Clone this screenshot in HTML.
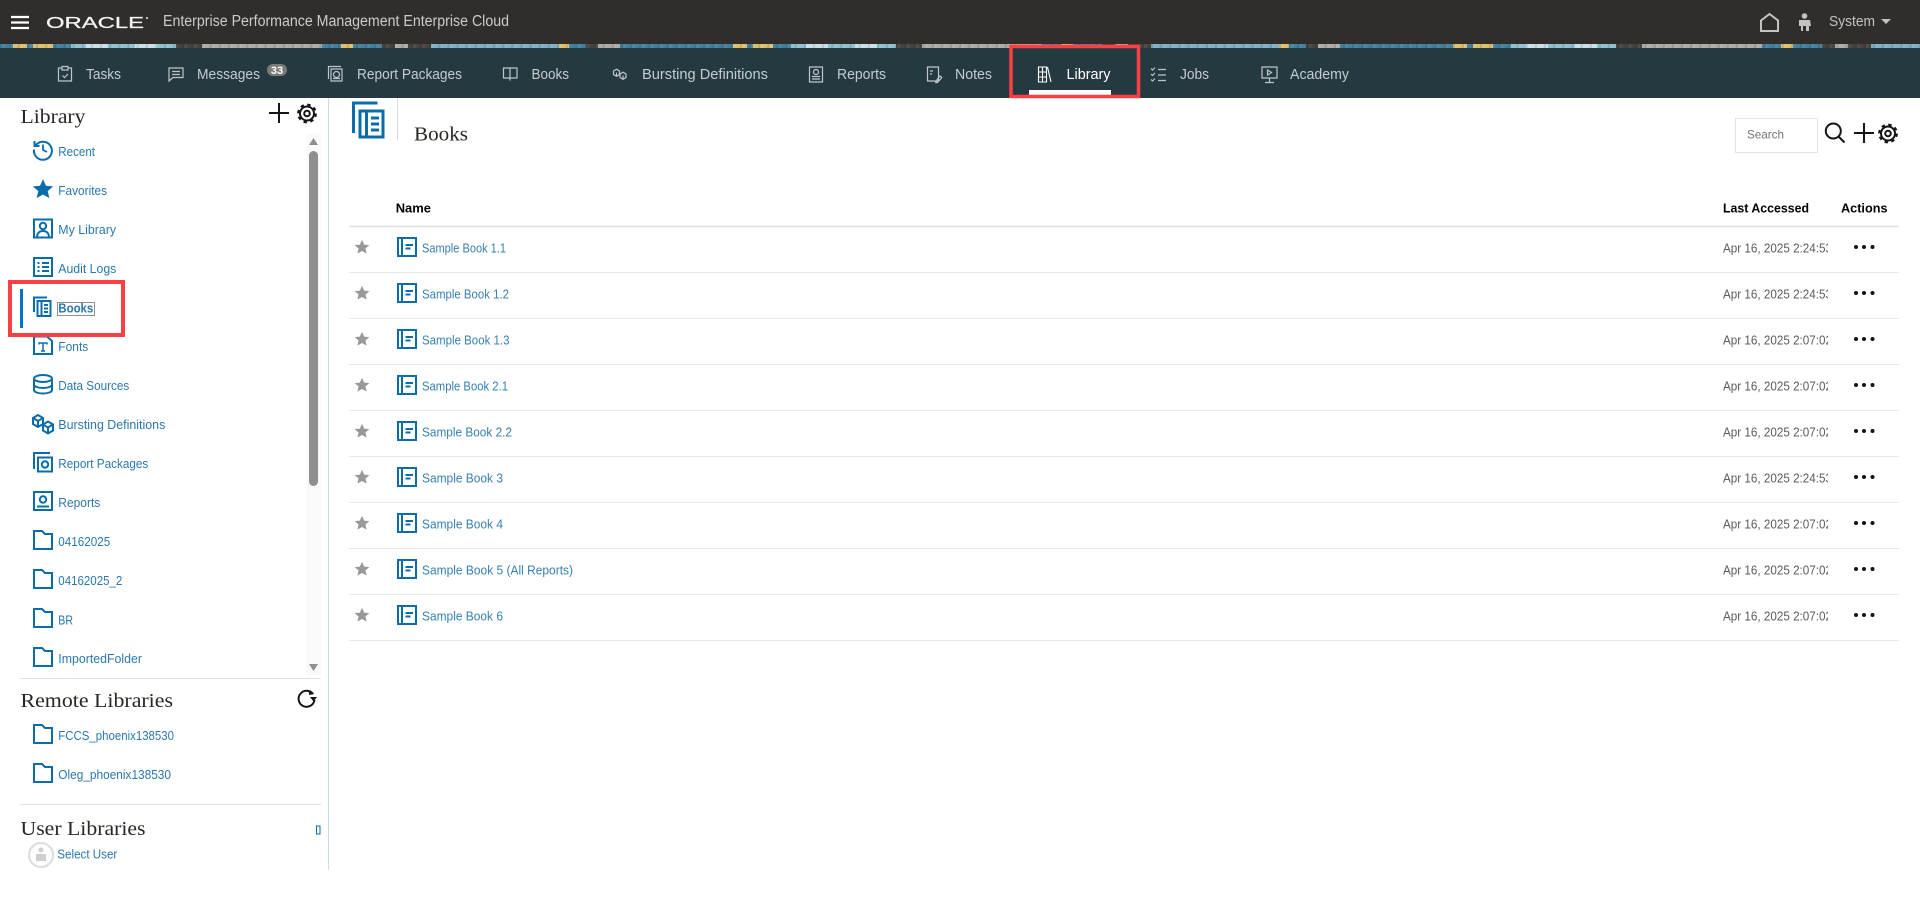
<!DOCTYPE html>
<html lang="en"><head><meta charset="utf-8"><title>Library - Books</title>
<style>
html,body{margin:0;padding:0;background:#fff;width:1920px;height:911px;overflow:hidden}
svg{display:block;position:absolute;left:0;top:0}
text{font-family:"Liberation Sans",sans-serif}
.nav{font-size:15px;fill:#c4cdcf}
.ni{fill:none;stroke:#bcc6c8;stroke-width:1.2}
.side{font-size:12.5px;fill:#2a78ae}
.link{font-size:12.5px;fill:#3680b0}
.date{font-size:12.5px;fill:#5c5c5c}
.th{font-size:13px;font-weight:bold;fill:#000}
.ser{font-family:"Liberation Serif",serif;font-size:20.5px;fill:#2a2622}
.ic{fill:none;stroke:#0b6cab;stroke-width:2}
.k{fill:none;stroke:#161513;stroke-width:2}
.rl{stroke:#e8e8e8;stroke-width:1}
</style></head><body>
<div style="position:absolute;left:0;top:0;width:1920px;height:44px;background:#312d2a"></div>
<div style="position:absolute;left:0;top:44px;width:1920px;height:4px;background-size:720px 100%;background-image:linear-gradient(90deg,#41819f 0 13px,#dcc06e 13px 27px,#41819f 27px 33px,#dcc06e 33px 53px,#41819f 53px 71px,#8fbfd0 71px 86px,#c8e0ea 86px 108px,#8fbfd0 108px 135px,#c8e0ea 135px 157px,#8fbfd0 157px 176px,#454240 176px 202px,#aeaaa6 202px 322px,#41819f 322px 341px,#dcc06e 341px 353px,#41819f 353px 382px,#454240 382px 395px,#aeaaa6 395px 408px,#454240 408px 431px,#7fb0c4 431px 559px,#dcc06e 559px 569px,#41819f 569px 586px,#454240 586px 598px,#aeaaa6 598px 620px,#41819f 620px 720px)"></div>
<div style="position:absolute;left:0;top:44px;width:1920px;height:4px;background:repeating-linear-gradient(100deg,rgba(0,0,0,.1) 0 2px,rgba(255,255,255,.06) 2px 5px,rgba(0,0,0,0) 5px 9px)"></div>
<div style="position:absolute;left:0;top:48px;width:1920px;height:50px;background:#253a40"></div>
<svg width="1920" height="911" viewBox="0 0 1920 911" xmlns="http://www.w3.org/2000/svg">
<defs>
<clipPath id="dc"><rect x="1723" y="220" width="105" height="430"/></clipPath>
<symbol id="folder" viewBox="0 0 20 20" overflow="visible"><path class="ic" d="M1 19V1h8l3 3h7v15z"/></symbol>
<symbol id="book" viewBox="0 0 20 20" overflow="visible"><rect class="ic" x="1" y="1" width="18" height="18"/><path class="ic" d="M5 1v18M8.500 8h7.500M8.500 11.500h5"/></symbol>
<symbol id="gear" viewBox="0 0 20 20" overflow="visible"><circle cx="10" cy="10" r="7" fill="none" stroke="#161513" stroke-width="2"/><circle cx="10" cy="10" r="8.800" fill="none" stroke="#161513" stroke-width="2.200" stroke-dasharray="3.400 3.510"/><circle cx="10" cy="10" r="2.800" fill="none" stroke="#161513" stroke-width="2"/></symbol>
<symbol id="star" viewBox="0 0 20 20" overflow="visible"><path d="M10 1l2.700 6 6.500.6-4.900 4.300 1.500 6.400L10 15l-5.800 3.300 1.500-6.400L.8 7.600 7.300 7z"/></symbol>
</defs>

<!-- top bar -->
<path d="M11 17h18M11 22.500h18M11 28h18" stroke="#fff" stroke-width="2.200"/>
<text x="46" y="28" font-size="15.400" fill="#f5f5f5" stroke="#f5f5f5" stroke-width=".25" textLength="98" lengthAdjust="spacingAndGlyphs">ORACLE</text>
<circle cx="147" cy="18" r="1" fill="#eee"/>
<text x="163" y="26" font-size="15.500" fill="#cdcbc9" textLength="346" lengthAdjust="spacingAndGlyphs">Enterprise Performance Management Enterprise Cloud</text>
<path d="M1761 31V20.500L1769.500 14l8.500 6.500V31z" fill="none" stroke="#c4c3c1" stroke-width="2"/>
<circle cx="1804.500" cy="16" r="2.800" fill="#c4c3c1"/><path d="M1799 20h11l1 6h-2v5h-3v-5h-3v5h-2v-5h-2z" fill="#c4c3c1"/>
<text x="1829" y="26" font-size="15" fill="#c4c3c1" textLength="46" lengthAdjust="spacingAndGlyphs">System</text>
<path d="M1881 19h10l-5 5z" fill="#c4c3c1"/>

<!-- nav -->
<g>
<text class="nav" x="86" y="79" textLength="35" lengthAdjust="spacingAndGlyphs">Tasks</text>
<text class="nav" x="197" y="79" textLength="63" lengthAdjust="spacingAndGlyphs">Messages</text>
<text class="nav" x="357" y="79" textLength="105" lengthAdjust="spacingAndGlyphs">Report Packages</text>
<text class="nav" x="531.500" y="79" textLength="37.500" lengthAdjust="spacingAndGlyphs">Books</text>
<text class="nav" x="642" y="79" textLength="126" lengthAdjust="spacingAndGlyphs">Bursting Definitions</text>
<text class="nav" x="837" y="79" textLength="49" lengthAdjust="spacingAndGlyphs">Reports</text>
<text class="nav" x="955" y="79" textLength="37" lengthAdjust="spacingAndGlyphs">Notes</text>
<text x="1066.500" y="79" font-size="15" fill="#fff" textLength="44" lengthAdjust="spacingAndGlyphs">Library</text>
<text class="nav" x="1180" y="79" textLength="29" lengthAdjust="spacingAndGlyphs">Jobs</text>
<text class="nav" x="1290" y="79" textLength="59" lengthAdjust="spacingAndGlyphs">Academy</text>

<rect x="267" y="64" width="20" height="12" rx="6" fill="#7a7b79"/>
<text x="277" y="74" font-size="11" font-weight="bold" fill="#fff" text-anchor="middle">33</text>

<path class="ni" d="M62 68h-3.500v13h13V68H68M62 66.500h6v3.500h-6zM62.500 75.500l2 2 3.500-3.500"/>
<path class="ni" d="M169 68h14v9.500h-10L169 81zM172 71.500h8M172 74.500h8"/>
<path class="ni" d="M328.500 79V66.500H341M331 69h11v12h-11zM336.500 71.500a3 3 0 1 0 .01 0zM333 78.500h7"/>
<path class="ni" d="M503.500 68h13.500v10h-13.500zM510 68v12.500"/>
<path class="ni" d="M613.500 71l3-1.800 3 1.800v3.500l-3 1.800-3-1.800zM620 74l3-1.800 3 1.800v3.500l-3 1.800-3-1.800zM616.500 72.500v3.500M623 75.500v3.500"/>
<path class="ni" d="M809.500 67h13v15h-13zM816 69.500a2.500 2.500 0 1 0 .01 0zM812 76.500h8M812 79h8"/>
<path class="ni" d="M927.500 67h11v14h-11zM930 71h3M930 74h2M936 81l4-5 1.800 1.500-4.300 5h-1.800z"/>
<g stroke="#fff" stroke-width="1.100" fill="none"><path d="M1038.500 67h4v15h-4zM1042.500 67h4v15h-4zM1047.500 67l3.500 15M1038.500 72h8M1038.500 77h8"/></g>
<path class="ni" d="M1151 68.500l1.500 1.500 2.500-2.500M1151 74l1.500 1.500 2.500-2.500M1151 79.500l1.500 1.500 2.500-2.500M1158 69.500h8M1158 75h8M1158 80.500h8"/>
<path class="ni" d="M1262 67h15v11h-15zM1269.500 78v4M1265 82.500h9M1267.500 70v5l4-2.500z"/>

<rect x="1029" y="90" width="82" height="5" fill="#fff"/>
<rect x="1011" y="46.500" width="127.500" height="50" fill="none" stroke="#fb3f42" stroke-width="3.500"/>
</g>

<!-- sidebar -->
<text class="ser" x="20.500" y="123" textLength="65" lengthAdjust="spacingAndGlyphs">Library</text>
<path d="M279 103v20M269 113h20" stroke="#161513" stroke-width="2"/>
<use href="#gear" x="297" y="103.500" width="20" height="20"/>

<rect x="306" y="133" width="15" height="542" fill="#fafafa"/>
<rect x="309" y="151" width="9" height="335" rx="4.500" fill="#8f8f8f"/>
<path d="M309 145l4.500-7 4.500 7zM309 664l4.500 7 4.500-7z" fill="#8f8f8f"/>

<g transform="translate(33,139.500)"><path class="ic" d="M3 5.500A9 9 0 1 1 1 10M1.500 1.500v5h5"/><path d="M10 5v5.500l4 2" fill="none" stroke="#0b6cab" stroke-width="1.800"/></g>
<use href="#star" x="32" y="178" width="22" height="22" fill="#0b6cab"/>
<g transform="translate(33,218.500)"><rect class="ic" x="1" y="1" width="18" height="18"/><circle cx="10" cy="7.500" r="3.200" class="ic" stroke-width="1.800"/><path class="ic" stroke-width="1.800" d="M4 19c0-5 3-6.500 6-6.500s6 1.500 6 6.500"/></g>
<g transform="translate(33,257)"><rect class="ic" x="1" y="1" width="18" height="18"/><path class="ic" d="M4.500 6h2M9 6h7M4.500 10h2M9 10h7M4.500 14h2M9 14h7"/></g>
<g transform="translate(33,296)"><path class="ic" d="M1 16V1.500h13"/><rect class="ic" x="4.500" y="5" width="13" height="15"/><path class="ic" d="M8.500 5v15M11 9h4M11 12.500h4M11 16h4"/></g>
<g transform="translate(33,335)"><path class="ic" d="M1 1.500V19h18V6l-5-4.500z"/><path d="M6 9.500V8h8v1.500M10 8v8M8 16h4" fill="none" stroke="#0b6cab" stroke-width="1.500"/></g>
<g transform="translate(33,374)"><ellipse class="ic" cx="10" cy="4.500" rx="9" ry="3.500"/><path class="ic" d="M1 4.500V16c0 2 4 3.500 9 3.500s9-1.500 9-3.500V4.500M1 10.500c0 2 4 3.500 9 3.500s9-1.500 9-3.500"/></g>
<g class="ic" stroke-width="2.200"><path d="M33 418l5-3 5 3v6l-5 3-5-3zM38 421v6M33 418l5 3 5-3"/><path d="M43 424.500l5-3 5 3v6l-5 3-5-3zM48 427.500v6M43 424.500l5 3 5-3"/></g>
<g transform="translate(33,452)"><path class="ic" d="M1 17V1h16"/><rect class="ic" x="5" y="5.500" width="14" height="14"/><circle cx="12" cy="12.500" r="3.200" class="ic" stroke-width="2.800"/></g>
<g transform="translate(33,491)"><rect class="ic" x="1" y="1" width="18" height="18"/><circle cx="10" cy="8.500" r="3.200" class="ic" stroke-width="2.800"/><path class="ic" d="M4 15.500h12"/></g>
<use href="#folder" x="33" y="530" width="20" height="20"/>
<use href="#folder" x="33" y="569" width="20" height="20"/>
<use href="#folder" x="33" y="608" width="20" height="20"/>
<use href="#folder" x="33" y="647" width="20" height="20"/>

<text class="side" x="58.300" y="156" textLength="36.700" lengthAdjust="spacingAndGlyphs">Recent</text>
<text class="side" x="58.300" y="195" textLength="48.700" lengthAdjust="spacingAndGlyphs">Favorites</text>
<text class="side" x="58.300" y="234" textLength="57.700" lengthAdjust="spacingAndGlyphs">My Library</text>
<text class="side" x="58.300" y="273" textLength="58" lengthAdjust="spacingAndGlyphs">Audit Logs</text>
<text class="side" x="58.300" y="312.500" font-weight="bold" textLength="35" lengthAdjust="spacingAndGlyphs">Books</text>
<rect x="57.500" y="302.500" width="37" height="13" fill="none" stroke="#222" stroke-width="1" stroke-dasharray="1 1"/>
<text class="side" x="58.300" y="351" textLength="30" lengthAdjust="spacingAndGlyphs">Fonts</text>
<text class="side" x="58.300" y="390" textLength="71" lengthAdjust="spacingAndGlyphs">Data Sources</text>
<text class="side" x="58.300" y="429" textLength="107" lengthAdjust="spacingAndGlyphs">Bursting Definitions</text>
<text class="side" x="58.300" y="468" textLength="90" lengthAdjust="spacingAndGlyphs">Report Packages</text>
<text class="side" x="58.300" y="507" textLength="42" lengthAdjust="spacingAndGlyphs">Reports</text>
<text class="side" x="58.300" y="546" textLength="52" lengthAdjust="spacingAndGlyphs">04162025</text>
<text class="side" x="58.300" y="585" textLength="64" lengthAdjust="spacingAndGlyphs">04162025_2</text>
<text class="side" x="58.300" y="624.500" textLength="14.700" lengthAdjust="spacingAndGlyphs">BR</text>
<text class="side" x="58.300" y="663" textLength="83.700" lengthAdjust="spacingAndGlyphs">ImportedFolder</text>

<rect x="20" y="289" width="3" height="39" fill="#0572ce"/>
<rect x="10" y="282" width="113" height="53" fill="none" stroke="#fb3f42" stroke-width="4"/>

<path d="M20 678.500h301M20 804.500h301" stroke="#e0e0e0" stroke-width="1"/>
<text class="ser" x="20.500" y="707" textLength="152.500" lengthAdjust="spacingAndGlyphs">Remote Libraries</text>
<g transform="translate(297,688)"><path class="k" stroke-width="2.400" d="M16 6A8 8 0 1 0 17.500 12"/><path d="M13 9h7l-3.500 4.500zM12 2l5 4-5 1z" fill="#161513"/></g>
<use href="#folder" x="33" y="724" width="20" height="20"/>
<use href="#folder" x="33" y="763" width="20" height="20"/>
<text class="side" x="58.300" y="740" textLength="115.700" lengthAdjust="spacingAndGlyphs">FCCS_phoenix138530</text>
<text class="side" x="58.300" y="779" textLength="112.700" lengthAdjust="spacingAndGlyphs">Oleg_phoenix138530</text>
<text class="ser" x="20.500" y="835" textLength="125" lengthAdjust="spacingAndGlyphs">User Libraries</text>
<rect x="316.500" y="826" width="3.500" height="8" fill="none" stroke="#0b6cab" stroke-width="1"/>
<circle cx="41" cy="855" r="12" fill="#fff" stroke="#dcdcdc" stroke-width="2"/>
<circle cx="41" cy="850" r="2.500" fill="#cfcfcf"/><path d="M36 854h10v7H36z" fill="#cfcfcf"/>
<text class="side" x="57.300" y="858.500" textLength="60" lengthAdjust="spacingAndGlyphs">Select User</text>
<path d="M328.500 98v772" stroke="#cfdbe3" stroke-width="1"/>

<!-- main header -->
<g transform="translate(352,101)"><path d="M1.500 32V2h24" fill="none" stroke="#0b6cab" stroke-width="3"/><rect x="8" y="10" width="23" height="26" fill="none" stroke="#0b6cab" stroke-width="3"/><path d="M14.500 10v26M19 17h8M19 23h8M19 29h8" fill="none" stroke="#0b6cab" stroke-width="3"/></g>
<path d="M397.500 98v42" stroke="#d6dfe4" stroke-width="1"/>
<text class="ser" x="414" y="140.500" style="font-size:19.500px" textLength="54" lengthAdjust="spacingAndGlyphs">Books</text>

<rect x="1735.500" y="118.500" width="82" height="34" fill="#fff" stroke="#dfe4e9"/>
<text x="1747" y="138.600" font-size="12" fill="#767676" textLength="37" lengthAdjust="spacingAndGlyphs">Search</text>
<circle cx="1833.300" cy="131" r="7.500" class="k"/><path d="M1838.500 136.500l6 6" class="k" stroke-width="2.200"/>
<path d="M1864 123v20M1854 133h20" stroke="#161513" stroke-width="2"/>
<use href="#gear" x="1878" y="123.500" width="20" height="20"/>

<!-- table -->
<text class="th" x="395.700" y="212.500" textLength="35.300" lengthAdjust="spacingAndGlyphs">Name</text>
<text class="th" x="1723" y="212.500" textLength="86" lengthAdjust="spacingAndGlyphs">Last Accessed</text>
<text class="th" x="1841" y="212.500" textLength="46.500" lengthAdjust="spacingAndGlyphs">Actions</text>
<path d="M349 226.500h1550" stroke="#d9dfe3" stroke-width="1.500"/>
<path class="rl" d="M349 272.500h1550M349 318.500h1550M349 364.500h1550M349 410.500h1550M349 456.500h1550M349 502.500h1550M349 548.500h1550M349 594.500h1550M349 640.500h1550"/>

<g fill="#999">
<use href="#star" x="354" y="239" width="16" height="16"/><use href="#star" x="354" y="285" width="16" height="16"/><use href="#star" x="354" y="331" width="16" height="16"/><use href="#star" x="354" y="377" width="16" height="16"/><use href="#star" x="354" y="423" width="16" height="16"/><use href="#star" x="354" y="469" width="16" height="16"/><use href="#star" x="354" y="515" width="16" height="16"/><use href="#star" x="354" y="561" width="16" height="16"/><use href="#star" x="354" y="607" width="16" height="16"/>
</g>
<use href="#book" x="397" y="237" width="20" height="20"/><use href="#book" x="397" y="283" width="20" height="20"/><use href="#book" x="397" y="329" width="20" height="20"/><use href="#book" x="397" y="375" width="20" height="20"/><use href="#book" x="397" y="421" width="20" height="20"/><use href="#book" x="397" y="467" width="20" height="20"/><use href="#book" x="397" y="513" width="20" height="20"/><use href="#book" x="397" y="559" width="20" height="20"/><use href="#book" x="397" y="605" width="20" height="20"/>

<text class="link" x="422" y="252.500" textLength="84" lengthAdjust="spacingAndGlyphs">Sample Book 1.1</text>
<text class="link" x="422" y="298.500" textLength="87" lengthAdjust="spacingAndGlyphs">Sample Book 1.2</text>
<text class="link" x="422" y="344.500" textLength="87.500" lengthAdjust="spacingAndGlyphs">Sample Book 1.3</text>
<text class="link" x="422" y="390.500" textLength="86" lengthAdjust="spacingAndGlyphs">Sample Book 2.1</text>
<text class="link" x="422" y="436.500" textLength="90" lengthAdjust="spacingAndGlyphs">Sample Book 2.2</text>
<text class="link" x="422" y="482.500" textLength="81" lengthAdjust="spacingAndGlyphs">Sample Book 3</text>
<text class="link" x="422" y="528.500" textLength="81" lengthAdjust="spacingAndGlyphs">Sample Book 4</text>
<text class="link" x="422" y="574.500" textLength="151" lengthAdjust="spacingAndGlyphs">Sample Book 5 (All Reports)</text>
<text class="link" x="422" y="620.500" textLength="81" lengthAdjust="spacingAndGlyphs">Sample Book 6</text>

<g clip-path="url(#dc)">
<text class="date" x="1723" y="252.500" textLength="109" lengthAdjust="spacingAndGlyphs">Apr 16, 2025 2:24:53</text>
<text class="date" x="1723" y="298.500" textLength="109" lengthAdjust="spacingAndGlyphs">Apr 16, 2025 2:24:53</text>
<text class="date" x="1723" y="344.500" textLength="109" lengthAdjust="spacingAndGlyphs">Apr 16, 2025 2:07:02</text>
<text class="date" x="1723" y="390.500" textLength="109" lengthAdjust="spacingAndGlyphs">Apr 16, 2025 2:07:02</text>
<text class="date" x="1723" y="436.500" textLength="109" lengthAdjust="spacingAndGlyphs">Apr 16, 2025 2:07:02</text>
<text class="date" x="1723" y="482.500" textLength="109" lengthAdjust="spacingAndGlyphs">Apr 16, 2025 2:24:53</text>
<text class="date" x="1723" y="528.500" textLength="109" lengthAdjust="spacingAndGlyphs">Apr 16, 2025 2:07:02</text>
<text class="date" x="1723" y="574.500" textLength="109" lengthAdjust="spacingAndGlyphs">Apr 16, 2025 2:07:02</text>
<text class="date" x="1723" y="620.500" textLength="109" lengthAdjust="spacingAndGlyphs">Apr 16, 2025 2:07:02</text>
</g>

<g fill="#161513">
<circle cx="1856" cy="247" r="2"/><circle cx="1864" cy="247" r="2"/><circle cx="1872.500" cy="247" r="2"/>
<circle cx="1856" cy="293" r="2"/><circle cx="1864" cy="293" r="2"/><circle cx="1872.500" cy="293" r="2"/>
<circle cx="1856" cy="339" r="2"/><circle cx="1864" cy="339" r="2"/><circle cx="1872.500" cy="339" r="2"/>
<circle cx="1856" cy="385" r="2"/><circle cx="1864" cy="385" r="2"/><circle cx="1872.500" cy="385" r="2"/>
<circle cx="1856" cy="431" r="2"/><circle cx="1864" cy="431" r="2"/><circle cx="1872.500" cy="431" r="2"/>
<circle cx="1856" cy="477" r="2"/><circle cx="1864" cy="477" r="2"/><circle cx="1872.500" cy="477" r="2"/>
<circle cx="1856" cy="523" r="2"/><circle cx="1864" cy="523" r="2"/><circle cx="1872.500" cy="523" r="2"/>
<circle cx="1856" cy="569" r="2"/><circle cx="1864" cy="569" r="2"/><circle cx="1872.500" cy="569" r="2"/>
<circle cx="1856" cy="615" r="2"/><circle cx="1864" cy="615" r="2"/><circle cx="1872.500" cy="615" r="2"/>
</g>
</svg>
</body></html>
